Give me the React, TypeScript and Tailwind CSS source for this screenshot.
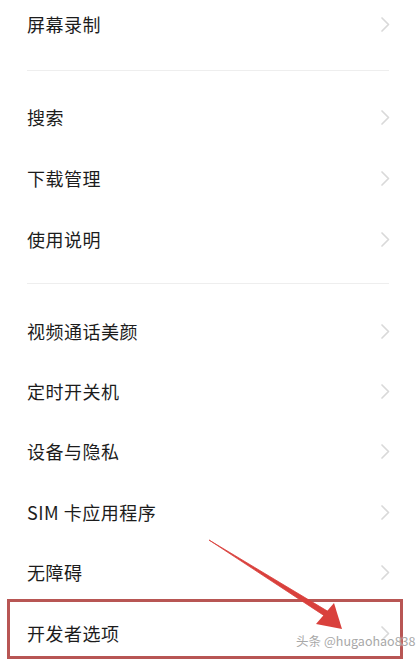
import React from 'react';

const Chevron = () => (
    <svg width="11" height="17" viewBox="0 0 11 17" fill="none" className="shrink-0">
        <path d="M2 2l6.5 6.5L2 15" stroke="#d9d9d9" strokeWidth="1.7" strokeLinecap="round" strokeLinejoin="round" />
    </svg>
);

const Row = ({ label, h }: { label: string; h: string }) => (
    <div className={`flex items-center justify-between pl-[27px] pr-[25px] ${h}`}>
        <span className="text-[18px] text-[#1c1c1c] tracking-[0.5px]">{label}</span>
        <Chevron />
    </div>
);

const Divider = ({ mt }: { mt: string }) => <div className={`mx-[27px] h-px bg-[#eeeeee] ${mt}`} />;

export default function App() {
    const groupOne = ['搜索', '下载管理', '使用说明'];
    const groupTwo = ['视频通话美颜', '定时开关机', '设备与隐私', 'SIM 卡应用程序', '无障碍', '开发者选项'];

    return (
        <div
            className="relative w-[416px] h-[662px] overflow-hidden bg-white"
            style={{ fontFamily: '"Noto Sans CJK SC", "Noto Sans", sans-serif' }}
        >
            <Row label="屏幕录制" h="h-[48px]" />
            <Divider mt="mt-[22px]" />
            <div className="mt-[16px]">
                {groupOne.map((l) => (
                    <Row key={l} label={l} h="h-[61px]" />
                ))}
            </div>
            <Divider mt="mt-[13px]" />
            <div className="mt-[17px]">
                {groupTwo.map((l) => (
                    <Row key={l} label={l} h="h-[60.4px]" />
                ))}
            </div>

            {/* highlight box */}
            <div className="absolute left-[7px] top-[599px] w-[396px] h-[60px] border-[3px] border-[#b85654]" />

            {/* arrow */}
            <svg className="absolute left-0 top-0" width="416" height="662" viewBox="0 0 416 662">
                <path d="M209 540 L331.6 613.6 L328.4 618.4 Z" fill="#d9403c" stroke="#d9403c" strokeWidth="0.8" strokeLinejoin="round" />
                <path d="M342 629 L316 624 L334 603 Z" fill="#d9403c" />
            </svg>

            {/* watermark */}
            <div className="absolute left-[296px] top-[632px] flex items-center gap-[3px] text-[12.5px] text-[#a8a8a8] [text-shadow:0_0_2px_#ffffff]">
                <span>头条</span>
                <span>@hugaohao838</span>
            </div>
        </div>
    );
}
